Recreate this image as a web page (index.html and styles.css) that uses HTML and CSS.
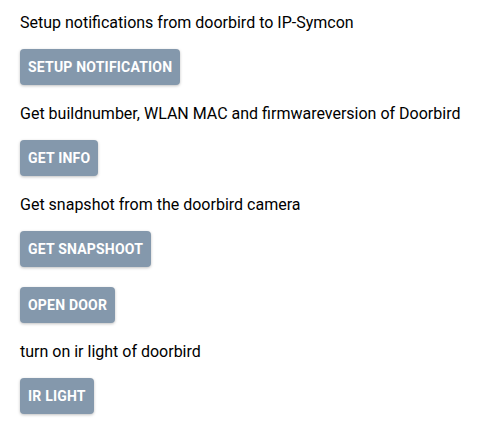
FILE: index.html
```html
<!DOCTYPE html>
<html>
<head>
<meta charset="utf-8">
<link rel="stylesheet" href="styles.css">
</head>
<body>
<div class="panel">
  <div class="label">Setup notifications from doorbird to IP-Symcon</div>
  <button class="btn">SETUP NOTIFICATION</button>
  <div class="label">Get buildnumber, WLAN MAC and firmwareversion of Doorbird</div>
  <button class="btn">GET INFO</button>
  <div class="label">Get snapshot from the doorbird camera</div>
  <button class="btn">GET SNAPSHOOT</button>
  <button class="btn">OPEN DOOR</button>
  <div class="label">turn on ir light of doorbird</div>
  <button class="btn">IR LIGHT</button>
</div>
</body>
</html>
```
FILE: styles.css
```css
html, body {
  margin: 0;
  padding: 0;
  background: #ffffff;
}
.panel {
  display: flex;
  flex-direction: column;
  align-items: flex-start;
  padding: 13px 20px;
  font-family: Roboto, "Liberation Sans", sans-serif;
}
.label {
  font-size: 16px;
  line-height: 20px;
  color: #000;
  margin-bottom: 16px;
}
.btn {
  font-family: Roboto, "Liberation Sans", sans-serif;
  font-size: 14px;
  font-weight: 700;
  letter-spacing: 0.2px;
  color: #ffffff;
  background: #8498ac;
  border: none;
  border-radius: 4px;
  height: 36px;
  padding: 0 8px;
  box-shadow: 0 1px 3px rgba(0,0,0,0.25);
  margin-bottom: 19px;
}
.btn + .btn {
  margin-top: 1px;
}
```
